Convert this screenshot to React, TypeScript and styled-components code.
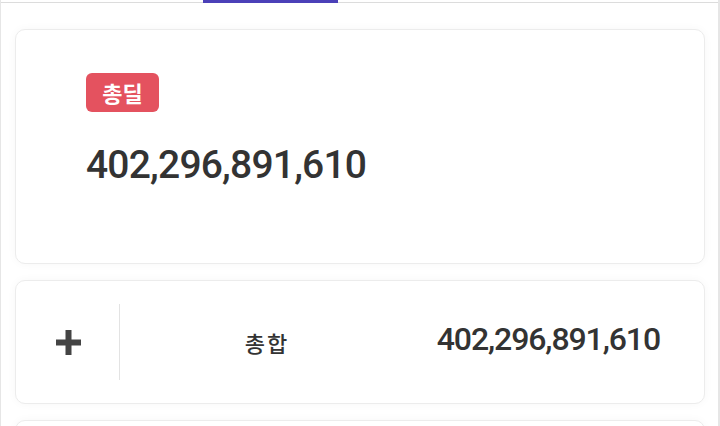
import React from 'react';
import styled, { createGlobalStyle } from 'styled-components';

const GlobalStyle = createGlobalStyle`
    html, body {
        margin: 0;
        padding: 0;
        background: #ffffff;
    }
    body {
        font-family: Roboto, 'Noto Sans CJK KR', sans-serif;
        color: #333333;
    }
`;

const Frame = styled.div`
    width: 720px;
    height: 426px;
    box-sizing: border-box;
    border-left: 1px solid #e6e6e6;
    border-right: 2px solid #e6e6e6;
    overflow: hidden;
    background: #ffffff;
`;

const TabStrip = styled.div`
    height: 2px;
    border-bottom: 1px solid #dcdcdc;
    display: flex;
`;

const TabIndicator = styled.div<{ $left: number; $width: number }>`
    margin-left: ${(p) => p.$left}px;
    width: ${(p) => p.$width}px;
    height: 3px;
    background: #4b40b8;
`;

const Content = styled.div`
    display: flex;
    flex-direction: column;
    gap: 16px;
    padding: 26px 13px 0 14px;
`;

const Card = styled.div<{ $height: number }>`
    height: ${(p) => p.$height}px;
    box-sizing: border-box;
    background: #ffffff;
    border: 1px solid #ececec;
    border-radius: 10px;
    box-shadow: 0 0 10px rgba(0, 0, 0, 0.035);
    flex-shrink: 0;
`;

const SummaryCard = styled(Card)`
    display: flex;
    flex-direction: column;
    align-items: flex-start;
    padding: 43px 0 0 70px;
`;

const Badge = styled.span`
    display: inline-flex;
    align-items: center;
    justify-content: center;
    width: 73px;
    height: 39px;
    border-radius: 6px;
    background: #e4525f;
    color: #ffffff;
    font-family: 'Noto Sans CJK KR', sans-serif;
    font-size: 22px;
    font-weight: 700;
    line-height: 1;
    padding-bottom: 1px;
    box-sizing: border-box;
`;

const BigAmount = styled.div`
    margin-top: 30px;
    font-family: Roboto, sans-serif;
    font-size: 39px;
    font-weight: 500;
    letter-spacing: -0.8px;
    color: #333333;
    line-height: 1.2;
`;

const TotalRow = styled(Card)`
    display: grid;
    grid-template-columns: 103px 1px 1fr 1fr;
    align-items: center;
`;

const ExpandCell = styled.div`
    display: flex;
    justify-content: center;
    align-items: center;
    padding-left: 2px;
`;

const Divider = styled.div`
    width: 1px;
    height: 76px;
    background: #e3e3e3;
`;

const Label = styled.div`
    text-align: center;
    font-family: 'Noto Sans CJK KR', sans-serif;
    font-size: 22px;
    font-weight: 500;
    letter-spacing: 2px;
    padding-left: 2px;
    color: #333333;
`;

const Amount = styled.div`
    text-align: right;
    padding: 0 44px 6px 0;
    font-family: Roboto, sans-serif;
    font-size: 32px;
    font-weight: 500;
    letter-spacing: -1.1px;
    color: #333333;
`;

const PlusIcon = () => (
    <svg width="25" height="25" viewBox="0 0 25 25">
        <rect x="0" y="9.5" width="25" height="6" fill="#444" />
        <rect x="9.5" y="0" width="6" height="25" fill="#444" />
    </svg>
);

const App: React.FC = () => {
    return (
        <>
            <GlobalStyle />
            <Frame>
                <TabStrip>
                    <TabIndicator $left={202} $width={135} />
                </TabStrip>
                <Content>
                    <SummaryCard $height={235}>
                        <Badge>총딜</Badge>
                        <BigAmount>402,296,891,610</BigAmount>
                    </SummaryCard>
                    <TotalRow $height={124}>
                        <ExpandCell>
                            <PlusIcon />
                        </ExpandCell>
                        <Divider />
                        <Label>총합</Label>
                        <Amount>402,296,891,610</Amount>
                    </TotalRow>
                    <Card $height={120} />
                </Content>
            </Frame>
        </>
    );
};

export default App;
